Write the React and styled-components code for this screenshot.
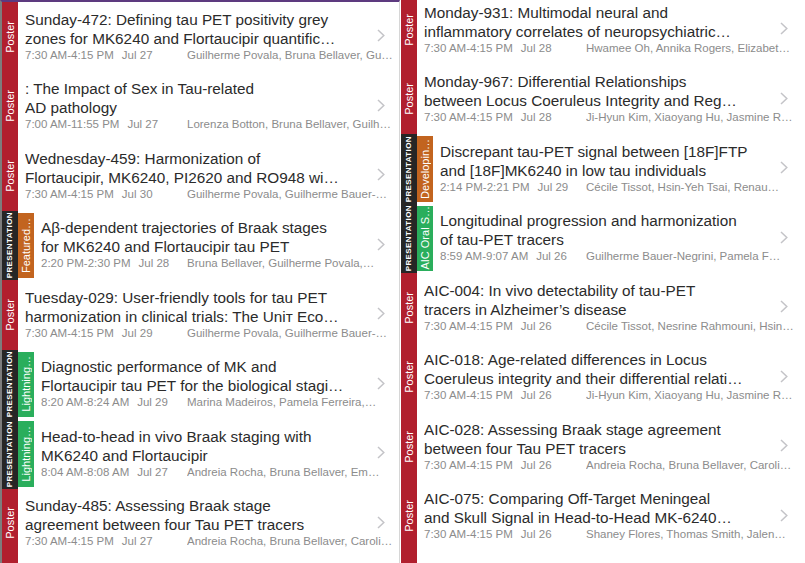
import React from 'react';
import styled, { createGlobalStyle } from 'styled-components';

const GlobalStyle = createGlobalStyle`
  html, body {
    margin: 0;
    padding: 0;
    background: #fff;
  }
  body {
    font-family: "Liberation Sans", Helvetica, Arial, sans-serif;
    overflow: hidden;
  }
`;

const RED = '#b11f2e';
const BLACK = '#262626';
const ORANGE = '#c2641f';
const GREEN = '#2aae5c';

const leftItems = [
  { kind: 'poster', title: ['Sunday-472: Defining tau PET positivity grey', 'zones for MK6240 and Flortaucipir quantific…'], time: '7:30 AM-4:15 PM', date: 'Jul 27', authors: 'Guilherme Povala, Bruna Bellaver, Gu…' },
  { kind: 'poster', title: [': The Impact of Sex in Tau-related', 'AD pathology'], time: '7:00 AM-11:55 PM', date: 'Jul 27', authors: 'Lorenza Botton, Bruna Bellaver, Guilh…' },
  { kind: 'poster', title: ['Wednesday-459: Harmonization of', 'Flortaucipir, MK6240, PI2620 and RO948 wi…'], time: '7:30 AM-4:15 PM', date: 'Jul 30', authors: 'Guilherme Povala, Guilherme Bauer-…' },
  { kind: 'presentation', track: 'Featured…', color: ORANGE, title: ['Aβ-dependent trajectories of Braak stages', 'for MK6240 and Flortaucipir tau PET'], time: '2:20 PM-2:30 PM', date: 'Jul 28', authors: 'Bruna Bellaver, Guilherme Povala,…' },
  { kind: 'poster', title: ['Tuesday-029: User-friendly tools for tau PET', 'harmonization in clinical trials: The Uniᴛ Eco…'], time: '7:30 AM-4:15 PM', date: 'Jul 29', authors: 'Guilherme Povala, Guilherme Bauer-…' },
  { kind: 'presentation', track: 'Lightning…', color: GREEN, title: ['Diagnostic performance of MK and', 'Flortaucipir tau PET for the biological stagi…'], time: '8:20 AM-8:24 AM', date: 'Jul 29', authors: 'Marina Madeiros, Pamela Ferreira,…' },
  { kind: 'presentation', track: 'Lightning…', color: GREEN, title: ['Head-to-head in vivo Braak staging with', 'MK6240 and Flortaucipir'], time: '8:04 AM-8:08 AM', date: 'Jul 27', authors: 'Andreia Rocha, Bruna Bellaver, Em…' },
  { kind: 'poster', title: ['Sunday-485: Assessing Braak stage', 'agreement between four Tau PET tracers'], time: '7:30 AM-4:15 PM', date: 'Jul 27', authors: 'Andreia Rocha, Bruna Bellaver, Caroli…' },
  { kind: 'poster', filler: true },
];

const rightItems = [
  { kind: 'poster', title: ['Monday-931: Multimodal neural and', 'inflammatory correlates of neuropsychiatric…'], time: '7:30 AM-4:15 PM', date: 'Jul 28', authors: 'Hwamee Oh, Annika Rogers, Elizabet…' },
  { kind: 'poster', title: ['Monday-967: Differential Relationships', 'between Locus Coeruleus Integrity and Reg…'], time: '7:30 AM-4:15 PM', date: 'Jul 28', authors: 'Ji-Hyun Kim, Xiaoyang Hu, Jasmine R…' },
  { kind: 'presentation', track: 'Developin…', color: ORANGE, title: ['Discrepant tau-PET signal between [18F]FTP', 'and [18F]MK6240 in low tau individuals'], time: '2:14 PM-2:21 PM', date: 'Jul 29', authors: 'Cécile Tissot, Hsin-Yeh Tsai, Renau…' },
  { kind: 'presentation', track: 'AIC Oral S…', color: GREEN, title: ['Longitudinal progression and harmonization', 'of tau-PET tracers'], time: '8:59 AM-9:07 AM', date: 'Jul 26', authors: 'Guilherme Bauer-Negrini, Pamela F…' },
  { kind: 'poster', title: ['AIC-004: In vivo detectability of tau-PET', 'tracers in Alzheimer’s disease'], time: '7:30 AM-4:15 PM', date: 'Jul 26', authors: 'Cécile Tissot, Nesrine Rahmouni, Hsin…' },
  { kind: 'poster', title: ['AIC-018: Age-related differences in Locus', 'Coeruleus integrity and their differential relati…'], time: '7:30 AM-4:15 PM', date: 'Jul 26', authors: 'Ji-Hyun Kim, Xiaoyang Hu, Jasmine R…' },
  { kind: 'poster', title: ['AIC-028: Assessing Braak stage agreement', 'between four Tau PET tracers'], time: '7:30 AM-4:15 PM', date: 'Jul 26', authors: 'Andreia Rocha, Bruna Bellaver, Caroli…' },
  { kind: 'poster', title: ['AIC-075: Comparing Off-Target Meningeal', 'and Skull Signal in Head-to-Head MK-6240…'], time: '7:30 AM-4:15 PM', date: 'Jul 26', authors: 'Shaney Flores, Thomas Smith, Jalen…' },
  { kind: 'poster', filler: true },
];

const Screen = styled.div`
  display: flex;
  width: 805px;
  height: 563px;
  overflow: hidden;
  background: #fff;
`;

const Column = styled.section`
  flex: 0 0 ${p => p.$width}px;
  box-sizing: border-box;
  height: 563px;
  overflow: hidden;
  padding-right: ${p => p.$padRight || 0}px;
  border-top: ${p => (p.$accent ? '2px solid #5d3a7f' : '0')};
  border-left: ${p => p.$edge};
  border-right: ${p => p.$divider};
`;

const List = styled.div`
  display: flex;
  flex-direction: column;
  margin-top: ${p => p.$offset}px;
`;

const Row = styled.div`
  display: flex;
  flex: 0 0 69.5px;
  height: 69.5px;
`;

const Strip = styled.div`
  flex: 0 0 16px;
  display: flex;
  align-items: center;
  justify-content: center;
  overflow: hidden;
  background: ${p => p.$color};
  margin: ${p => (p.$inset ? '2px 0' : '0')};
`;

const StripText = styled.span`
  writing-mode: vertical-rl;
  transform: rotate(180deg);
  white-space: nowrap;
  color: #fff;
  font-size: ${p => p.$size}px;
  font-weight: ${p => p.$weight || 400};
  letter-spacing: ${p => p.$spacing || 0}px;
  line-height: 1;
`;

const Content = styled.div`
  flex: 1;
  min-width: 0;
  display: grid;
  grid-template-columns: minmax(0, 1fr) 18px;
  grid-template-rows: auto auto;
  align-content: start;
  padding: 7.5px 4px 0 7px;
`;

const Title = styled.div`
  grid-column: 1;
  grid-row: 1;
  font-size: 15.3px;
  line-height: 19px;
  color: #2b2b2b;
`;

const TitleLine = styled.div`
  white-space: nowrap;
  overflow: hidden;
  text-overflow: ellipsis;
  min-height: 19px;
`;

const Chevron = styled.svg`
  grid-column: 2;
  grid-row: 1 / 3;
  align-self: center;
  justify-self: start;
  display: block;
`;

const Meta = styled.div`
  grid-column: 1 / 3;
  grid-row: 2;
  display: grid;
  grid-template-columns: ${p => p.$lead}px minmax(0, 1fr);
  font-size: 11.5px;
  line-height: 14px;
  color: #8c8c8c;
`;

const When = styled.div`
  white-space: nowrap;
`;

const DateText = styled.span`
  margin-left: 8px;
`;

const Authors = styled.div`
  white-space: nowrap;
  overflow: hidden;
  text-overflow: ellipsis;
`;

const Session = ({ item }) => {
  const isPoster = item.kind === 'poster';
  return (
    <Row>
      {isPoster ? (
        <Strip $color={RED}>
          {!item.filler && <StripText $size={11}>Poster</StripText>}
        </Strip>
      ) : (
        <>
          <Strip $color={BLACK}>
            <StripText $size={8} $weight={700} $spacing={0.4}>PRESENTATION</StripText>
          </Strip>
          <Strip $color={item.color} $inset>
            <StripText $size={11}>{item.track}</StripText>
          </Strip>
        </>
      )}
      {!item.filler && (
        <Content>
          <Title>
            {item.title.map(line => (
              <TitleLine key={line}>{line}</TitleLine>
            ))}
          </Title>
          <Chevron width="8" height="13" viewBox="0 0 8 13">
            <polyline points="1,1 6.8,6.5 1,12" fill="none" stroke="#c4c4c8" strokeWidth="1.5" />
          </Chevron>
          <Meta $lead={isPoster ? 162 : 146}>
            <When>
              {item.time}
              <DateText>{item.date}</DateText>
            </When>
            <Authors>{item.authors}</Authors>
          </Meta>
        </Content>
      )}
    </Row>
  );
};

export default function App() {
  return (
    <>
      <GlobalStyle />
      <Screen>
        <Column $width={400} $accent $edge="2px solid #7d7d7d" $divider="1px solid #d6d6d6">
          <List $offset={0}>
            {leftItems.map((item, i) => (
              <Session key={i} item={item} />
            ))}
          </List>
        </Column>
        <Column $width={405} $padRight={3} $edge="1px solid #fff" $divider="0">
          <List $offset={-5}>
            {rightItems.map((item, i) => (
              <Session key={i} item={item} />
            ))}
          </List>
        </Column>
      </Screen>
    </>
  );
}
